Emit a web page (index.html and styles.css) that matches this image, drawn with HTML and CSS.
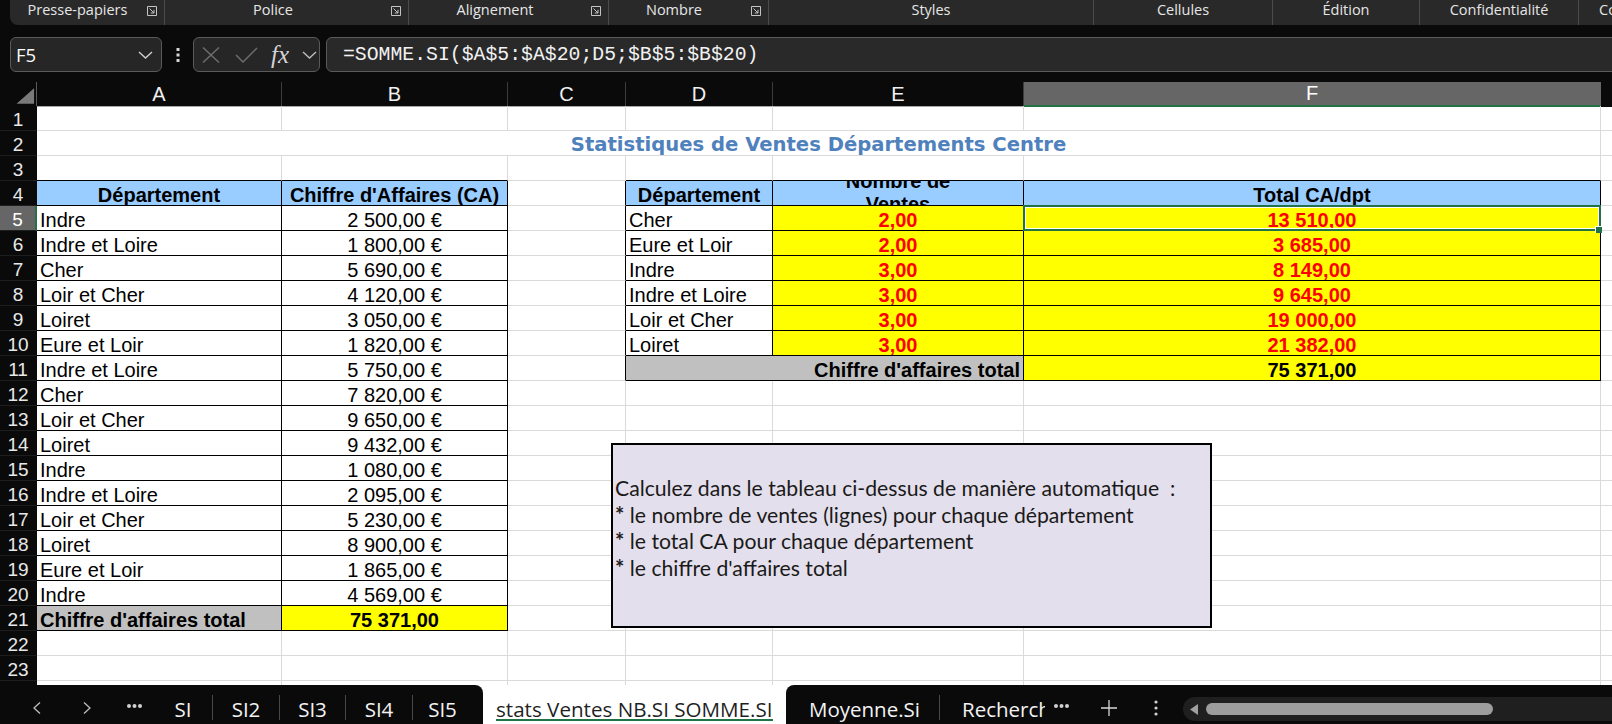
FILE: index.html
```html
<!DOCTYPE html>
<html lang="fr">
<head>
<meta charset="utf-8">
<title>stats Ventes NB.SI SOMME.SI</title>
<link rel="stylesheet" href="styles.css">
</head>
<body>
<div class="app">
  <div class="ribbon-wrap">
    <div class="ribbon">
      <div class="grp g1"><span class="lbl">Presse-papiers</span><svg class="launch" viewBox="0 0 10 10"><path d="M0.5 0.5H9.5V9.5H0.5Z"/><path d="M2.5 2.5L7 7M3.8 7H7V3.8"/></svg></div>
      <div class="grp g2"><span class="lbl">Police</span><svg class="launch" viewBox="0 0 10 10"><path d="M0.5 0.5H9.5V9.5H0.5Z"/><path d="M2.5 2.5L7 7M3.8 7H7V3.8"/></svg></div>
      <div class="grp g3"><span class="lbl">Alignement</span><svg class="launch" viewBox="0 0 10 10"><path d="M0.5 0.5H9.5V9.5H0.5Z"/><path d="M2.5 2.5L7 7M3.8 7H7V3.8"/></svg></div>
      <div class="grp g4"><span class="lbl">Nombre</span><svg class="launch" viewBox="0 0 10 10"><path d="M0.5 0.5H9.5V9.5H0.5Z"/><path d="M2.5 2.5L7 7M3.8 7H7V3.8"/></svg></div>
      <div class="grp g5"><span class="lbl">Styles</span></div>
      <div class="grp g6"><span class="lbl">Cellules</span></div>
      <div class="grp g7"><span class="lbl">Édition</span></div>
      <div class="grp g8"><span class="lbl">Confidentialité</span></div>
      <div class="grp g9"><span class="lbl">Commentaires</span></div>
    </div>
  </div>

  <div class="fbar">
    <div class="namebox"><span class="nb-text">F5</span><svg class="chev" viewBox="0 0 15 8"><polyline points="1,1 7.5,7 14,1"/></svg></div>
    <div class="vdots"><svg viewBox="0 0 4 16" class="vd"><rect x="0.5" y="1" width="3" height="3"/><rect x="0.5" y="6.5" width="3" height="3"/><rect x="0.5" y="12" width="3" height="3"/></svg></div>
    <div class="fxbox">
      <svg class="ico-x" viewBox="0 0 18 16"><path d="M1 0.5L17 15.5M17 0.5L1 15.5"/></svg>
      <svg class="ico-ok" viewBox="0 0 23 16"><path d="M1 8L8 15L22 1"/></svg>
      <span class="fx">fx</span>
      <svg class="chev chev2" viewBox="0 0 15 8"><polyline points="1,1 7.5,7 14,1"/></svg>
    </div>
    <div class="formula">=SOMME.SI($A$5:$A$20;D5;$B$5:$B$20)</div>
  </div>

  <div class="sheet">
    <div class="colhead">
      <div class="ch corner"><svg viewBox="0 0 37 23" class="tri"><polygon points="35,5 35,21 17,21"/></svg></div>
      <div class="ch">A</div>
      <div class="ch">B</div>
      <div class="ch">C</div>
      <div class="ch">D</div>
      <div class="ch">E</div>
      <div class="ch on">F</div>
      <div class="ch ext"></div>
    </div>

    <div class="grid">
      <div class="c rh">1</div><div class="c"></div><div class="c"></div><div class="c"></div><div class="c"></div><div class="c"></div><div class="c"></div><div class="c x"></div>

      <div class="c rh">2</div><div class="c title">Statistiques de Ventes Départements Centre</div><div class="c x"></div>

      <div class="c rh">3</div><div class="c kb"></div><div class="c kb"></div><div class="c"></div><div class="c kb"></div><div class="c kb"></div><div class="c kb"></div><div class="c x"></div>

      <div class="c rh">4</div><div class="c k hd">Département</div><div class="c k hd">Chiffre d'Affaires (CA)</div><div class="c kr"></div><div class="c k hd">Département</div><div class="c k hd wrap"><span>Nombre de<br>Ventes</span></div><div class="c k hd">Total CA/dpt</div><div class="c x"></div>

      <div class="c rh on">5</div><div class="c k">Indre</div><div class="c k ctr">2 500,00 €</div><div class="c kr"></div><div class="c k">Cher</div><div class="c k y red">2,00</div><div class="c k y red sel">13 510,00</div><div class="c x"></div>

      <div class="c rh">6</div><div class="c k">Indre et Loire</div><div class="c k ctr">1 800,00 €</div><div class="c kr"></div><div class="c k">Eure et Loir</div><div class="c k y red">2,00</div><div class="c k y red">3 685,00</div><div class="c x"></div>

      <div class="c rh">7</div><div class="c k">Cher</div><div class="c k ctr">5 690,00 €</div><div class="c kr"></div><div class="c k">Indre</div><div class="c k y red">3,00</div><div class="c k y red">8 149,00</div><div class="c x"></div>

      <div class="c rh">8</div><div class="c k">Loir et Cher</div><div class="c k ctr">4 120,00 €</div><div class="c kr"></div><div class="c k">Indre et Loire</div><div class="c k y red">3,00</div><div class="c k y red">9 645,00</div><div class="c x"></div>

      <div class="c rh">9</div><div class="c k">Loiret</div><div class="c k ctr">3 050,00 €</div><div class="c kr"></div><div class="c k">Loir et Cher</div><div class="c k y red">3,00</div><div class="c k y red">19 000,00</div><div class="c x"></div>

      <div class="c rh">10</div><div class="c k">Eure et Loir</div><div class="c k ctr">1 820,00 €</div><div class="c kr"></div><div class="c k">Loiret</div><div class="c k y red">3,00</div><div class="c k y red">21 382,00</div><div class="c x"></div>

      <div class="c rh">11</div><div class="c k">Indre et Loire</div><div class="c k ctr">5 750,00 €</div><div class="c kr"></div><div class="c k gr bold rt span2">Chiffre d'affaires total</div><div class="c k y bold ctr">75 371,00</div><div class="c x"></div>

      <div class="c rh">12</div><div class="c k">Cher</div><div class="c k ctr">7 820,00 €</div><div class="c"></div><div class="c"></div><div class="c"></div><div class="c"></div><div class="c x"></div>

      <div class="c rh">13</div><div class="c k">Loir et Cher</div><div class="c k ctr">9 650,00 €</div><div class="c"></div><div class="c"></div><div class="c"></div><div class="c"></div><div class="c x"></div>

      <div class="c rh">14</div><div class="c k">Loiret</div><div class="c k ctr">9 432,00 €</div><div class="c"></div><div class="c"></div><div class="c"></div><div class="c"></div><div class="c x"></div>

      <div class="c rh">15</div><div class="c k">Indre</div><div class="c k ctr">1 080,00 €</div><div class="c"></div><div class="c"></div><div class="c"></div><div class="c"></div><div class="c x"></div>

      <div class="c rh">16</div><div class="c k">Indre et Loire</div><div class="c k ctr">2 095,00 €</div><div class="c"></div><div class="c"></div><div class="c"></div><div class="c"></div><div class="c x"></div>

      <div class="c rh">17</div><div class="c k">Loir et Cher</div><div class="c k ctr">5 230,00 €</div><div class="c"></div><div class="c"></div><div class="c"></div><div class="c"></div><div class="c x"></div>

      <div class="c rh">18</div><div class="c k">Loiret</div><div class="c k ctr">8 900,00 €</div><div class="c"></div><div class="c"></div><div class="c"></div><div class="c"></div><div class="c x"></div>

      <div class="c rh">19</div><div class="c k">Eure et Loir</div><div class="c k ctr">1 865,00 €</div><div class="c"></div><div class="c"></div><div class="c"></div><div class="c"></div><div class="c x"></div>

      <div class="c rh">20</div><div class="c k">Indre</div><div class="c k ctr">4 569,00 €</div><div class="c"></div><div class="c"></div><div class="c"></div><div class="c"></div><div class="c x"></div>

      <div class="c rh">21</div><div class="c k gr bold">Chiffre d'affaires total</div><div class="c k y bold ctr">75 371,00</div><div class="c"></div><div class="c"></div><div class="c"></div><div class="c"></div><div class="c x"></div>

      <div class="c rh">22</div><div class="c"></div><div class="c"></div><div class="c"></div><div class="c"></div><div class="c"></div><div class="c"></div><div class="c x"></div>

      <div class="c rh">23</div><div class="c"></div><div class="c"></div><div class="c"></div><div class="c"></div><div class="c"></div><div class="c"></div><div class="c x"></div>

      <div class="c rh">24</div><div class="c"></div><div class="c"></div><div class="c"></div><div class="c"></div><div class="c"></div><div class="c"></div><div class="c x"></div>
    </div>

    <div class="tbox">
      <p>Calculez dans le tableau ci-dessus de manière automatique&nbsp; :</p>
      <p><b class="ast">*</b> le nombre de ventes (lignes) pour chaque département</p>
      <p><b class="ast">*</b> le total CA pour chaque département</p>
      <p><b class="ast">*</b> le chiffre d'affaires total</p>
    </div>
  </div>

  <div class="tabs">
    <div class="tabs-left">
      <svg class="nav nav-l" viewBox="0 0 8 12"><polyline points="7,0.5 1,6 7,11.5"/></svg>
      <svg class="nav nav-r" viewBox="0 0 8 12"><polyline points="1,0.5 7,6 1,11.5"/></svg>
      <svg class="dots dots-l" viewBox="0 0 15 4"><circle cx="2" cy="2" r="2"/><circle cx="7.5" cy="2" r="2"/><circle cx="13" cy="2" r="2"/></svg>
      <span class="tb t1">SI</span><i class="sep"></i>
      <span class="tb t2">SI2</span><i class="sep"></i>
      <span class="tb t3">SI3</span><i class="sep"></i>
      <span class="tb t4">SI4</span><i class="sep"></i>
      <span class="tb t5">SI5</span>
    </div>
    <div class="tab-active"><span class="at-label">stats Ventes NB.SI SOMME.SI</span></div>
    <div class="tabs-right">
      <span class="tb moy">Moyenne.Si</span><i class="sep"></i>
      <span class="tb rech">RechercheV</span>
      <svg class="dots dots-r" viewBox="0 0 15 4"><circle cx="2" cy="2" r="2"/><circle cx="7.5" cy="2" r="2"/><circle cx="13" cy="2" r="2"/></svg>
      <svg class="plus" viewBox="0 0 16 16"><path d="M8 0V16M0 8H16"/></svg>
      <svg class="vmore" viewBox="0 0 4 16"><circle cx="2" cy="2" r="1.6"/><circle cx="2" cy="8" r="1.6"/><circle cx="2" cy="14" r="1.6"/></svg>
      <div class="track">
        <svg class="tarrow" viewBox="0 0 8 11"><polygon points="8,0 8,11 0,5.5"/></svg>
        <div class="thumb"></div>
      </div>
    </div>
  </div>
</div>
</body>
</html>
```

FILE: styles.css
```css
html, body {
  margin: 0;
  padding: 0;
}
body {
  width: 1612px;
  height: 724px;
  overflow: hidden;
  background: #0a0a0a;
  font-family: "Liberation Sans", Arial, sans-serif;
}
.app {
  width: 1612px;
  height: 724px;
  display: flex;
  flex-direction: column;
}

/* ---------- Ribbon ---------- */
.ribbon-wrap {
  height: 25px;
  padding-left: 10px;
  background: #0a0a0a;
  flex: none;
}
.ribbon {
  height: 25px;
  background: #292929;
  border-bottom-left-radius: 8px;
  display: flex;
}
.grp {
  height: 25px;
  box-sizing: border-box;
  display: flex;
  align-items: flex-start;
  border-right: 1px solid #4b4b4b;
  flex: none;
}
.lbl {
  flex: 1;
  text-align: center;
  font-family: "Open Sans", sans-serif;
  font-size: 14.5px;
  line-height: 20px;
  color: #e6e6e6;
  white-space: nowrap;
}
.launch {
  width: 10px;
  height: 10px;
  margin: 6px 7px 0 0;
  flex: none;
  fill: none;
  stroke: #c4c4c4;
  stroke-width: 1;
}
.g1 { width: 155px; }
.g1 .lbl { padding-right: 2px; }
.g2 { width: 244px; }
.g2 .lbl { padding-right: 10px; }
.g3 { width: 200px; }
.g3 .lbl { padding-right: 10px; }
.g4 { width: 160px; }
.g4 .lbl { padding-right: 12px; }
.g5 { width: 325px; }
.g6 { width: 179px; }
.g7 { width: 147px; }
.g8 { width: 159px; }
.g9 { flex: 1; border-right: none; overflow: hidden; }
.g9 .lbl { text-align: left; padding-left: 20px; }

/* ---------- Formula bar ---------- */
.fbar {
  height: 57px;
  box-sizing: border-box;
  padding: 12px 0 0 10px;
  display: flex;
  align-items: flex-start;
  flex: none;
  overflow: hidden;
}
.namebox {
  width: 152px;
  height: 35px;
  box-sizing: border-box;
  border: 1px solid #5a5a5a;
  border-radius: 6px;
  background: #262626;
  display: flex;
  align-items: center;
  padding: 0 8px 0 5px;
  flex: none;
}
.nb-text {
  flex: 1;
  font-family: "Open Sans", sans-serif;
  font-size: 18.5px;
  color: #fafafa;
}
.chev {
  width: 15px;
  height: 8px;
  fill: none;
  stroke: #cfcfcf;
  stroke-width: 1.4;
  flex: none;
}
.vdots {
  width: 31px;
  height: 35px;
  display: flex;
  align-items: center;
  justify-content: center;
  flex: none;
}
.vd {
  width: 4px;
  height: 16px;
  fill: #d6d6d6;
}
.fxbox {
  width: 127px;
  height: 35px;
  box-sizing: border-box;
  border: 1px solid #5a5a5a;
  border-radius: 6px;
  background: #262626;
  display: flex;
  align-items: center;
  padding-left: 8px;
  flex: none;
}
.ico-x {
  width: 18px;
  height: 16px;
  fill: none;
  stroke: #6c6c6c;
  stroke-width: 1.5;
  flex: none;
}
.ico-ok {
  width: 23px;
  height: 16px;
  margin-left: 15px;
  fill: none;
  stroke: #6c6c6c;
  stroke-width: 1.5;
  flex: none;
}
.fx {
  margin-left: 13px;
  font-family: "Liberation Serif", serif;
  font-style: italic;
  font-size: 25px;
  line-height: 23px;
  color: #d4d4d4;
  width: 22px;
  flex: none;
}
.chev2 {
  margin-left: 9px;
  stroke: #bdbdbd;
}
.formula {
  margin-left: 6px;
  width: 1400px;
  height: 35px;
  box-sizing: border-box;
  border: 1px solid #5a5a5a;
  border-radius: 6px;
  background: #292929;
  padding-left: 16px;
  display: flex;
  align-items: center;
  font-family: "Liberation Mono", monospace;
  font-size: 19.8px;
  color: #f2f2f2;
  white-space: nowrap;
  flex: none;
}

/* ---------- Sheet ---------- */
.sheet {
  position: relative;
  height: 603px;
  overflow: hidden;
  background: #ffffff;
  flex: none;
}
.colhead {
  display: grid;
  grid-template-columns: 37px 245px 226px 118px 147px 251px 577px 11px;
  height: 24px;
  background: #0a0a0a;
}
.ch {
  box-sizing: border-box;
  border-right: 1px solid #3c3c3c;
  border-bottom: 1px solid #a8a8a8;
  display: flex;
  align-items: center;
  justify-content: center;
  font-size: 20px;
  color: #f0f0f0;
}
.ch.corner {
  border-right: 1px solid #5a5a5a;
  border-bottom-color: #0a0a0a;
}
.tri {
  width: 37px;
  height: 23px;
  fill: #7a7a7a;
}
.ch.on {
  background: #666666;
  color: #ffffff;
  border-right-color: #666666;
  border-bottom: 2px solid #217346;
}
.ch.ext {
  border-right: none;
  border-bottom-color: #0a0a0a;
}

.grid {
  display: grid;
  grid-template-columns: 37px 245px 226px 118px 147px 251px 577px 11px;
  grid-auto-rows: 25px;
}
.c {
  box-sizing: border-box;
  border-right: 1px solid #dadada;
  border-bottom: 1px solid #dadada;
  display: flex;
  align-items: flex-end;
  padding: 0 3px;
  font-size: 20px;
  line-height: 20px;
  color: #000;
  white-space: nowrap;
  min-width: 0;
}
.c.x {
  border-right: none;
}
.c.rh {
  background: #0a0a0a;
  color: #e8e8e8;
  font-size: 19px;
  justify-content: center;
  padding: 0;
  border-right: 1px solid #0a0a0a;
  border-bottom: 1px solid #1e1e1e;
}
.c.rh.on {
  background: #666666;
  color: #ffffff;
  border-right: 2px solid #217346;
}
.c.title {
  grid-column: span 6;
  justify-content: center;
  font-family: "DejaVu Sans", Verdana, sans-serif;
  font-weight: bold;
  font-size: 19.6px;
  color: #4f81bd;
}
.c.k {
  border-right-color: #000;
  border-bottom-color: #000;
}
.c.kb {
  border-bottom-color: #000;
}
.c.kr {
  border-right-color: #000;
}
.c.hd {
  background: #99ccff;
  font-weight: bold;
  justify-content: center;
}
.c.wrap {
  white-space: normal;
  align-items: center;
  text-align: center;
  line-height: 23px;
  overflow: hidden;
}
.c.ctr {
  justify-content: center;
}
.c.rt {
  justify-content: flex-end;
}
.c.y {
  background: #ffff00;
  justify-content: center;
}
.c.red {
  color: #ff0000;
  font-weight: bold;
}
.c.bold {
  font-weight: bold;
}
.c.gr {
  background: #c0c0c0;
}
.c.span2 {
  grid-column: span 2;
}
.c.sel {
  position: relative;
}
.c.sel::after {
  content: "";
  position: absolute;
  left: -1px;
  top: -1px;
  right: -1px;
  bottom: -1px;
  border: 2px solid #217346;
  box-shadow: inset 0 0 0 1px #ffffff;
}
.c.sel::before {
  content: "";
  position: absolute;
  right: -2px;
  bottom: -3px;
  width: 6px;
  height: 6px;
  background: #217346;
  border: 1px solid #ffffff;
  border-right: none;
  border-bottom: none;
  z-index: 2;
}

/* floating text box (shape) */
.tbox {
  position: absolute;
  left: 611px;
  top: 361px;
  width: 601px;
  height: 185px;
  box-sizing: border-box;
  border: 2px solid #000;
  background: #e4dfec;
  padding: 31px 0 0 2px;
  font-family: Lato, "Open Sans", sans-serif;
  font-size: 21.2px;
  line-height: 25.5px;
  color: #1a1a1a;
}
.tbox p {
  margin: 0;
  white-space: nowrap;
}
.ast {
  font-weight: bold;
  font-size: 22px;
}

/* ---------- Sheet tabs ---------- */
.tabs {
  height: 39px;
  display: flex;
  background: #ffffff;
  flex: none;
}
.tabs-left {
  width: 483px;
  background: #0a0a0a;
  border-top-right-radius: 8px;
  display: flex;
  align-items: flex-start;
  flex: none;
}
.tabs-right {
  flex: 1;
  background: #0a0a0a;
  border-top-left-radius: 8px;
  display: flex;
  align-items: flex-start;
  overflow: hidden;
}
.nav {
  width: 8px;
  height: 12px;
  margin-top: 17px;
  fill: none;
  stroke: #bdbdbd;
  stroke-width: 1.3;
  flex: none;
}
.nav-l { margin-left: 33px; }
.nav-r { margin-left: 42px; }
.dots {
  width: 15px;
  height: 4px;
  margin-top: 19px;
  fill: #d0d0d0;
  flex: none;
}
.dots-l { margin-left: 36px; }
.tb {
  margin-top: 14px;
  font-family: "Open Sans", sans-serif;
  font-size: 20.5px;
  line-height: 20px;
  color: #f2f2f2;
  text-align: center;
  white-space: nowrap;
  flex: none;
}
.t1 { width: 58px; margin-left: 12px; }
.t2 { width: 66px; }
.t3 { width: 65px; }
.t4 { width: 66px; }
.t5 { width: 59px; }
.sep {
  width: 1px;
  height: 25px;
  margin-top: 10px;
  background: #474747;
  flex: none;
}
.tab-active {
  width: 303px;
  box-sizing: border-box;
  background: #ffffff;
  padding: 0 0 3px 13px;
  display: flex;
  align-items: flex-end;
  flex: none;
}
.at-label {
  font-family: "Open Sans", sans-serif;
  font-size: 20.6px;
  line-height: 20px;
  color: #1f1f1f;
  border-bottom: 2px solid #217346;
  white-space: nowrap;
}
.moy {
  width: 153px;
  box-sizing: border-box;
  padding-left: 23px;
  text-align: left;
}
.rech {
  width: 105px;
  box-sizing: border-box;
  padding-left: 22px;
  text-align: left;
  overflow: hidden;
}
.dots-r { margin-left: 9px; }
.plus {
  width: 16px;
  height: 16px;
  margin: 15px 0 0 32px;
  fill: none;
  stroke: #d8d8d8;
  stroke-width: 1.3;
  flex: none;
}
.vmore {
  width: 4px;
  height: 16px;
  margin: 15px 0 0 37px;
  fill: #d0d0d0;
  flex: none;
}
.track {
  margin: 12px 0 0 25px;
  height: 24px;
  flex: 1;
  background: #1f1f1f;
  border-radius: 12px 0 0 12px;
  display: flex;
  align-items: center;
}
.tarrow {
  width: 8px;
  height: 11px;
  margin-left: 7px;
  fill: #a0a0a0;
  flex: none;
}
.thumb {
  width: 287px;
  height: 12px;
  margin-left: 8px;
  border-radius: 6px;
  background: #9d9d9d;
  flex: none;
}
```
